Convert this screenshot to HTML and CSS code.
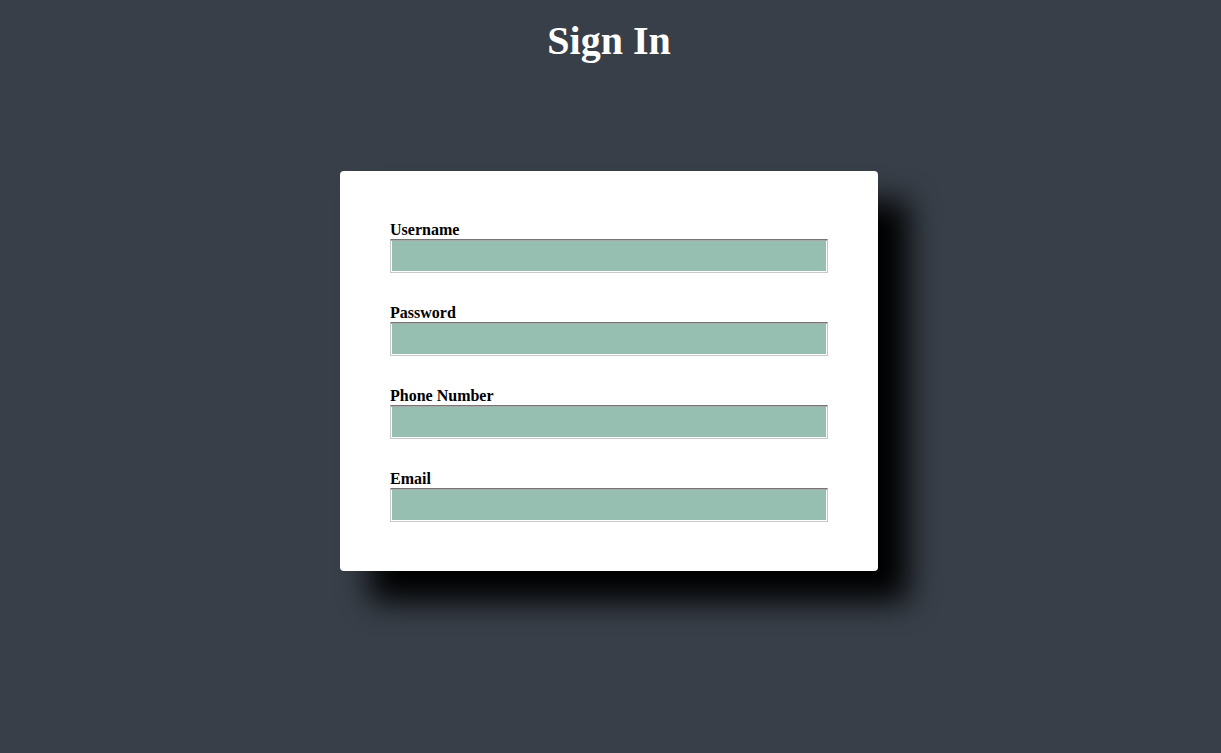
FILE: index.html
```html
<!DOCTYPE html>
<html>
<head>
<meta charset="utf-8">
<link rel="stylesheet" href="styles.css">
</head>
<body>
<h1 class="title">Sign In</h1>
<form class="card">
  <div class="field">
    <label class="label">Username</label>
    <input class="input" type="text">
  </div>
  <div class="field">
    <label class="label">Password</label>
    <input class="input" type="password">
  </div>
  <div class="field">
    <label class="label">Phone Number</label>
    <input class="input" type="text">
  </div>
  <div class="field">
    <label class="label">Email</label>
    <input class="input" type="text">
  </div>
</form>
</body>
</html>
```
FILE: styles.css
```css
html, body {
  margin: 0;
  padding: 0;
  height: 100%;
}
body {
  background: #383f48;
  font-family: "Liberation Serif", "Times New Roman", serif;
  display: flex;
  flex-direction: column;
  align-items: center;
  padding-right: 3px;
  box-sizing: border-box;
}
.title {
  margin: 18px 0 0;
  font-size: 40px;
  line-height: 46px;
  font-weight: bold;
  color: #ffffff;
  text-align: center;
}
.card {
  margin-top: 107px;
  width: 438px;
  padding: 50px 50px 49px;
  background: #ffffff;
  border-radius: 4px;
  box-shadow: 30px 30px 30px #000000;
  display: flex;
  flex-direction: column;
  gap: 31px;
}
.field {
  display: flex;
  flex-direction: column;
}
.label {
  font-size: 16px;
  font-weight: bold;
  line-height: 18px;
  color: #000000;
}
.input {
  box-sizing: border-box;
  width: 438px;
  height: 34px;
  margin: 0;
  padding: 0;
  background: #96bfb1;
  border: 1px solid #c8c8c8;
  border-top-color: #767676;
  box-shadow: inset 0 1px 0 #a9a9a9, inset 1px 0 0 #ffffff, inset -1px 0 0 #ffffff, inset 0 -1px 0 #ffffff;
}
```
